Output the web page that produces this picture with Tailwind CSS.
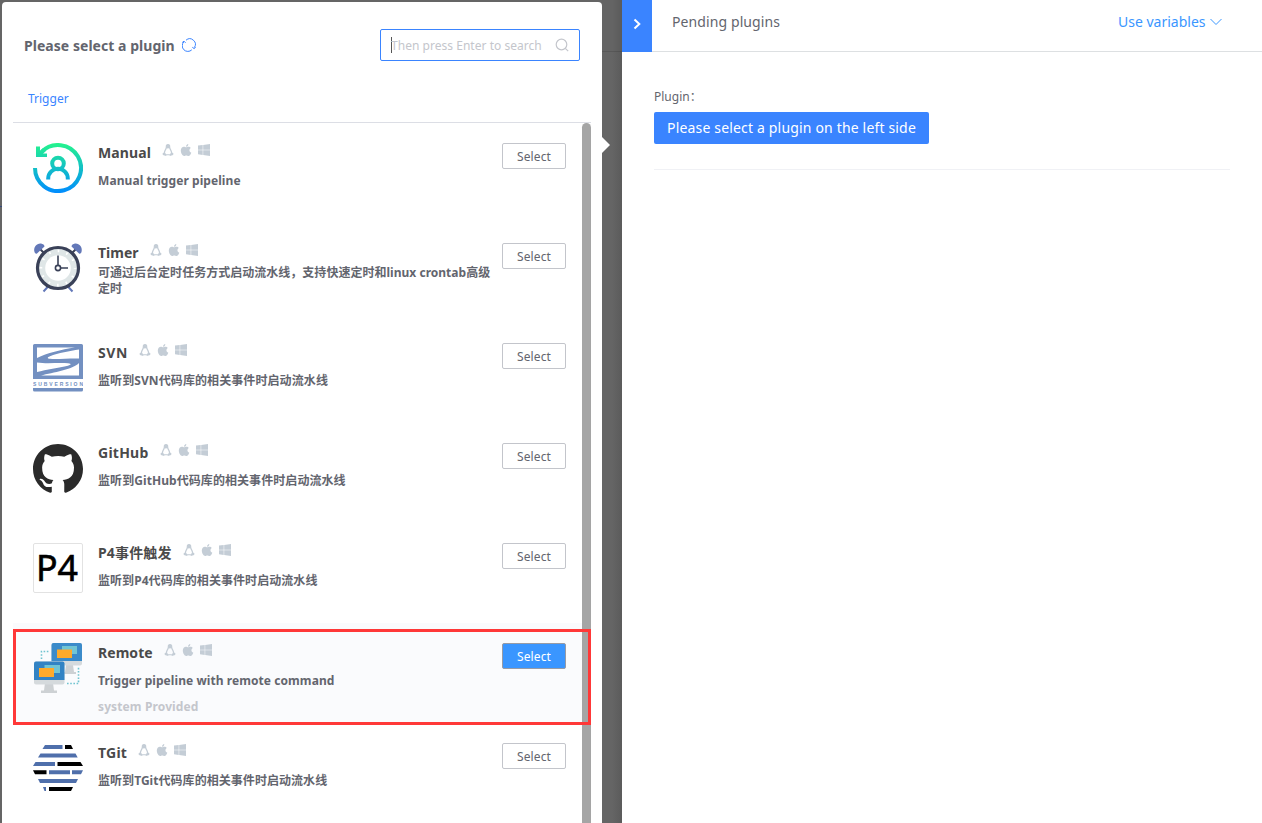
<!DOCTYPE html>
<html lang="en">
<head>
<meta charset="utf-8">
<title>Plugin selector</title>
<script src="https://cdn.jsdelivr.net/npm/@tailwindcss/browser@4"></script>
</head>
<body class="relative flex h-[823px] w-[1262px] overflow-hidden bg-[#656565] font-['Noto_Sans','Noto_Sans_CJK_SC',sans-serif] text-[12px] text-[#63656e]">
<svg class="absolute size-0">
  <defs>
    <symbol id="linux" viewBox="0 0 12 12"><path d="M6 .7C4.600.7 4.300 1.700 4.400 3c.1 1.200-.5 1.800-1.100 3-.5 1-.9 2-.9 3M6 .7c1.400 0 1.700 1 1.600 2.300-.1 1.200.5 1.800 1.100 3 .5 1 .9 2 .9 3" fill="none" stroke="#c4cdd6" stroke-width="1.300"/><path d="M4.500 1h3v2.600L6 4.700l-1.500-1zM.5 9.600l1.900-1.400 2.300 2.600-.6 1.200-3.200-1.100zM11.500 9.600 9.600 8.200l-2.300 2.600.6 1.200 3.200-1.100zM4.500 10.300h3v.9h-3z" fill="#c4cdd6"/></symbol>
    <symbol id="apple" viewBox="0 0 12 12"><path d="M8.300 0c.1 1.500-1 2.800-2.300 2.800C5.900 1.400 7 .2 8.300 0zM6.100 3.300c.5 0 1.200-.6 2.300-.6 1 0 1.900.5 2.400 1.300-2 1.200-1.700 3.900.5 4.700C10.700 10.300 9.700 12 8.500 12c-.9 0-1.200-.5-2.200-.5S5 12 4.200 12C2.600 12 .8 9.100.8 6.500c0-2.500 1.500-3.800 3-3.800 1 0 1.800.6 2.300.6z" fill="#c4cdd6"/></symbol>
    <symbol id="windows" viewBox="0 0 12 12"><path d="M0 1.600 4.700 1v4.700H0zM5.200.9 12 0v5.700H5.200zM0 6.200h4.700v4.700L0 10.300zM5.200 6.200H12V12l-6.800-1z" fill="#c4cdd6"/></symbol>
    <linearGradient id="teal" x1="0" y1="0" x2="0" y2="50" gradientUnits="userSpaceOnUse"><stop stop-color="#25f48c"/><stop offset="1" stop-color="#008cff"/></linearGradient>
  </defs>
</svg>

<!-- dimmed page behind the panels -->
<div class="absolute left-[602px] top-0 h-[52px] w-5 border-b border-[#585858] bg-[#646464]"></div>
<div class="absolute left-[602px] top-0 h-full w-5 bg-linear-to-r from-transparent from-50% to-black/10"></div>
<div class="absolute left-0 top-[206px] h-px w-[2px] bg-[#34497c]"></div>

<!-- plugin list -->
<section class="relative ml-[2px] mt-[2px] h-[821px] w-[600px] shrink-0 rounded-t-[4px] bg-white">
  <header class="flex h-[86px] justify-between pl-[22px] pr-[22px] pt-[27px]">
    <div class="flex h-8 items-center">
      <h1 class="w-[158px] whitespace-nowrap text-[14px] font-bold tracking-[0.04px]">Please select a plugin</h1>
      <svg class="h-[14px] w-[14px]" viewBox="0 0 14 14" fill="none" stroke="#3a84ff" stroke-width="1"><path d="M4 2.200A5.600 5.600 0 0 1 12.300 9.600M1.900 3.800A5.600 5.600 0 0 0 9.800 11.800M.2 4.500l1.800-1.300 1.600 1.600M10.300 9.300l1.800 1.300 1.600-1.300"/></svg>
    </div>
    <div class="flex h-8 w-[200px] items-center justify-between rounded-[2px] border border-[#3a84ff] pl-[10px] pr-[10px]">
      <div class="flex items-center text-[#c4c6cc]"><span class="h-4 w-px bg-[#555]"></span><span class="-ml-px whitespace-nowrap pt-[2px] tracking-[0.03px]">Then press Enter to search</span></div>
      <svg class="h-[14px] w-[14px]" viewBox="0 0 14 14" fill="none" stroke="#c4c6cc" stroke-width="1.200"><circle cx="6.500" cy="6.500" r="5.300"/><path d="m10.300 10.300 2.900 2.900"/></svg>
    </div>
  </header>
  <nav class="ml-[11px] h-[35px] w-[578px] border-b border-[#dcdee5] pl-[15px] text-[12px] leading-[22px] text-[#3a84ff]">Trigger</nav>

  <ul class="ml-[11px] h-[700px] w-[569px]">
    <li class="flex h-[100px] pl-[20px] pr-[16px] pt-[20px]">
      <svg class="h-[50px] w-[50px] shrink-0" viewBox="0 0 50 50" fill="none" stroke="url(#teal)" stroke-width="4"><path d="M2 25A23 23 0 1 0 8.500 9"/><path d="M3 3.500h4V8l3-3 3.500 2.500L10 10.500h4V14H3z" fill="url(#teal)" stroke="none"/><circle cx="25" cy="20.500" r="5.800"/><path d="M15.200 36.500v-1a9.800 9.800 0 0 1 19.600 0v1"/></svg>
      <div class="ml-[15px] w-[404px] shrink-0">
        <div class="flex h-[18px] items-center"><h2 class="whitespace-nowrap text-[14px] font-bold tracking-[0.1px] text-[#4a4a4a]">Manual</h2><div class="mb-[5px] ml-[11px] flex gap-[6px]"><svg class="size-3"><use href="#linux"/></svg><svg class="size-3"><use href="#apple"/></svg><svg class="size-3"><use href="#windows"/></svg></div></div>
        <p class="mt-[11px] whitespace-nowrap font-bold leading-[18px] tracking-[0.07px]">Manual trigger pipeline</p>
      </div>
      <button class="h-[26px] w-16 shrink-0 rounded-[2px] border border-[#c3c5cb] bg-white pt-[2px] text-[12px] tracking-[0.1px]">Select</button>
    </li>
    <li class="flex h-[100px] pl-[20px] pr-[16px] pt-[20px]">
      <svg class="h-[50px] w-[50px] shrink-0" viewBox="0 0 50 50"><path d="M5 4l8 8M45 4l-8 8" stroke="#3a4158" stroke-width="2"/><path d="M1.500 9C0 4 4 0 8 .5c2 .3 3.500 1.500 3.500 3L4 10.500C3 11 2 10.500 1.500 9zM48.500 9C50 4 46 0 42 .5c-2 .3-3.500 1.500-3.500 3L46 10.500c1 .5 2 0 2.500-1.500z" fill="#6378b8"/><path d="m15.500 43-5 5.500M34.500 43l5 5.500" stroke="#6378b8" stroke-width="2"/><circle cx="25" cy="25" r="20.500" fill="#dfe6e7" stroke="#3a4158" stroke-width="3.200"/><circle cx="25" cy="25" r="12.800" fill="#fff"/><circle cx="25" cy="25" r="17" fill="none" stroke="#fff" stroke-width="2.500" stroke-dasharray="1.600 7.300" stroke-dashoffset=".8"/><path d="M25 12.500v10M27.500 25H35" stroke="#3a4158" stroke-width="1.600"/><circle cx="25" cy="25" r="2.600" fill="#fff" stroke="#3a4158" stroke-width="1.600"/></svg>
      <div class="ml-[15px] w-[404px] shrink-0">
        <div class="flex h-[18px] items-center"><h2 class="whitespace-nowrap text-[14px] font-bold text-[#4a4a4a]">Timer</h2><div class="mb-[5px] ml-[11px] flex gap-[6px]"><svg class="size-3"><use href="#linux"/></svg><svg class="size-3"><use href="#apple"/></svg><svg class="size-3"><use href="#windows"/></svg></div></div>
        <p class="mt-[4px] whitespace-nowrap font-bold leading-4 tracking-[0.02px]">可通过后台定时任务方式启动流水线，支持快速定时和linux crontab高级<br>定时</p>
      </div>
      <button class="h-[26px] w-16 shrink-0 rounded-[2px] border border-[#c3c5cb] bg-white pt-[2px] text-[12px] tracking-[0.1px]">Select</button>
    </li>
    <li class="flex h-[100px] pl-[20px] pr-[16px] pt-[20px]">
      <svg class="h-[50px] w-[50px] shrink-0" viewBox="0 0 50 50"><path d="M0 2.500Q0 1 1.500 1h47Q50 1 50 2.500V36H0zM0 45h50v2q0 1.500-1.500 1.500h-47Q0 48.500 0 47z" fill="#7390c1"/><path d="M4 4.500h38C28 6.500 14 10 4 15zM46 6.500V15.500C38 15 24 16.500 17 15.800c-3-.4-3-1.400 0-2.600C25 10 37 8 46 6.500zM4 19.500c9 1.500 22 0 31 .8 4 .4 3 1.600 0 2.400C26 25 13 26.500 4 29zM46 20v12.500H8C20 29.500 40 26.500 46 20z" fill="#fff"/><text x="0" y="42.500" textLength="50" font-family="Liberation Sans" font-size="5" font-weight="bold" fill="#7390c1">SUBVERSION</text></svg>
      <div class="ml-[15px] w-[404px] shrink-0">
        <div class="flex h-[18px] items-center"><h2 class="whitespace-nowrap text-[14px] font-bold tracking-[0.6px] text-[#4a4a4a]">SVN</h2><div class="mb-[5px] ml-[11px] flex gap-[6px]"><svg class="size-3"><use href="#linux"/></svg><svg class="size-3"><use href="#apple"/></svg><svg class="size-3"><use href="#windows"/></svg></div></div>
        <p class="mt-[11px] whitespace-nowrap font-bold leading-[18px] tracking-[0.09px]">监听到SVN代码库的相关事件时启动流水线</p>
      </div>
      <button class="h-[26px] w-16 shrink-0 rounded-[2px] border border-[#c3c5cb] bg-white pt-[2px] text-[12px] tracking-[0.1px]">Select</button>
    </li>
    <li class="flex h-[100px] pl-[20px] pr-[16px] pt-[20px]">
      <svg class="h-[50px] w-[50px] shrink-0" viewBox="0 0 16 16"><path fill="#2b2b2b" d="M8 .3C3.580.3 0 3.880 0 8.300c0 3.540 2.290 6.530 5.470 7.590.4.07.55-.17.55-.38 0-.19-.01-.82-.01-1.490-2.010.37-2.530-.49-2.690-.94-.09-.23-.48-.94-.82-1.130-.28-.15-.68-.52-.01-.53.63-.01 1.080.58 1.230.82.72 1.210 1.870.87 2.330.66.07-.52.28-.87.51-1.070-1.780-.2-3.640-.89-3.640-3.950 0-.87.31-1.590.82-2.150-.08-.2-.36-1.020.08-2.120 0 0 .67-.21 2.200.82.64-.18 1.320-.27 2-.27s1.360.09 2 .27c1.530-1.040 2.200-.82 2.200-.82.44 1.100.16 1.920.08 2.120.51.56.82 1.270.82 2.150 0 3.070-1.870 3.750-3.650 3.950.29.25.54.73.54 1.480 0 1.070-.01 1.930-.01 2.200 0 .21.15.46.55.38A8.010 8.010 0 0 0 16 8.300c0-4.420-3.580-8-8-8z"/></svg>
      <div class="ml-[15px] w-[404px] shrink-0">
        <div class="flex h-[18px] items-center"><h2 class="whitespace-nowrap text-[14px] font-bold tracking-[0.25px] text-[#4a4a4a]">GitHub</h2><div class="mb-[5px] ml-[11px] flex gap-[6px]"><svg class="size-3"><use href="#linux"/></svg><svg class="size-3"><use href="#apple"/></svg><svg class="size-3"><use href="#windows"/></svg></div></div>
        <p class="mt-[11px] whitespace-nowrap font-bold leading-[18px] tracking-[0.07px]">监听到GitHub代码库的相关事件时启动流水线</p>
      </div>
      <button class="h-[26px] w-16 shrink-0 rounded-[2px] border border-[#c3c5cb] bg-white pt-[2px] text-[12px] tracking-[0.1px]">Select</button>
    </li>
    <li class="flex h-[100px] pl-[20px] pr-[16px] pt-[20px]">
      <div class="flex h-[50px] w-[50px] shrink-0 items-center justify-center rounded-[2px] border border-[#e2e2e2] text-black"><svg class="size-12" viewBox="0 0 48 48"><text x="2" y="37" textLength="42" lengthAdjust="spacingAndGlyphs" font-size="36" stroke="#000" stroke-width=".6">P4</text></svg></div>
      <div class="ml-[15px] w-[404px] shrink-0">
        <div class="flex h-[18px] items-center"><h2 class="whitespace-nowrap text-[14px] font-bold tracking-[0.15px] text-[#4a4a4a]">P4事件触发</h2><div class="mb-[5px] ml-[11px] flex gap-[6px]"><svg class="size-3"><use href="#linux"/></svg><svg class="size-3"><use href="#apple"/></svg><svg class="size-3"><use href="#windows"/></svg></div></div>
        <p class="mt-[11px] whitespace-nowrap font-bold leading-[18px] tracking-[0.06px]">监听到P4代码库的相关事件时启动流水线</p>
      </div>
      <button class="h-[26px] w-16 shrink-0 rounded-[2px] border border-[#c3c5cb] bg-white pt-[2px] text-[12px] tracking-[0.1px]">Select</button>
    </li>
    <li class="flex h-[100px] bg-[#fafbfd] pl-[20px] pr-[16px] pt-[20px]">
      <svg class="h-[50px] w-[50px] shrink-0" viewBox="0 0 50 50"><path d="M8.500 16V8.500H17M34 40.500h11.500V24" fill="none" stroke="#6fc3d0" stroke-width="1.600" stroke-dasharray="1.600 1.600"/><path d="M33 22h7l1 7h2v2H28v-2h4z" fill="#cdd1d4"/><rect x="18.500" width="30.500" height="22.500" rx="2" fill="#d5dadd"/><path d="M18.500 18V2q0-2 2-2H47q2 0 2 2v16z" fill="#3b8bca"/><path d="M29 3h15v8H29z" fill="#71c5d4"/><path d="M24 6.500h15V15H24z" fill="#fdaa2b"/><path d="M12 40h8l1 7.500h3V50H8v-2.500h3z" fill="#cdd1d4"/><rect x="1" y="18.500" width="30.500" height="23" rx="2" fill="#d5dadd"/><path d="M1 37V20.500q0-2 2-2h26.500q2 0 2 2V37z" fill="#3283c4"/><path d="M11.500 22H27v8H11.500z" fill="#71c5d4"/><path d="M6 25h15v9H6z" fill="#fdaa2b"/></svg>
      <div class="ml-[15px] w-[404px] shrink-0">
        <div class="flex h-[18px] items-center"><h2 class="whitespace-nowrap text-[14px] font-bold tracking-[0.05px] text-[#4a4a4a]">Remote</h2><div class="mb-[5px] ml-[11px] flex gap-[6px]"><svg class="size-3"><use href="#linux"/></svg><svg class="size-3"><use href="#apple"/></svg><svg class="size-3"><use href="#windows"/></svg></div></div>
        <p class="mt-[11px] whitespace-nowrap font-bold leading-[18px] tracking-[0.07px]">Trigger pipeline with remote command</p>
        <p class="mt-[8px] whitespace-nowrap font-bold leading-[18px] tracking-[0.12px] text-[#c4c6cc]">system Provided</p>
      </div>
      <button class="h-[26px] w-16 shrink-0 rounded-[2px] border border-[#979ba5] bg-[#3a96ff] pt-[2px] text-[12px] tracking-[0.1px] text-white">Select</button>
    </li>
    <li class="flex h-[100px] pl-[20px] pr-[16px] pt-[20px]">
      <svg class="h-[50px] w-[50px] shrink-0" viewBox="0 0 50 50"><path d="M12 2h17.500v4H9.500zM7.500 10.500h35l2.200 4H5zM2.500 19H22v4H0zM16 27.200h21v4H16zM39 27.200h11l-2 4h-9zM5 36h40l-2 4H7zM10 44h3v4h-1.500z" fill="#4f6fab"/><path d="M32 2h6l2 4h-8zM24.500 19h23l2.500 4H24.500zM0 27.200h13.500v4H2zM16 44h24l-2 4H16z" fill="#000"/></svg>
      <div class="ml-[15px] w-[404px] shrink-0">
        <div class="flex h-[18px] items-center"><h2 class="whitespace-nowrap text-[14px] font-bold tracking-[0.25px] text-[#4a4a4a]">TGit</h2><div class="mb-[5px] ml-[11px] flex gap-[6px]"><svg class="size-3"><use href="#linux"/></svg><svg class="size-3"><use href="#apple"/></svg><svg class="size-3"><use href="#windows"/></svg></div></div>
        <p class="mt-[11px] whitespace-nowrap font-bold leading-[18px] tracking-[0.05px]">监听到TGit代码库的相关事件时启动流水线</p>
      </div>
      <button class="h-[26px] w-16 shrink-0 rounded-[2px] border border-[#c3c5cb] bg-white pt-[2px] text-[12px] tracking-[0.1px]">Select</button>
    </li>
  </ul>
  <!-- scrollbar, pointer and highlight frame -->
  <div class="absolute left-[580px] top-[121px] h-[710px] w-[9px] rounded-t-full bg-[#a5a5a5]"></div>
  <svg class="absolute left-[600px] top-[135px] h-4 w-2" viewBox="0 0 8 16"><path d="M0 0l8 8-8 8z" fill="#fff"/></svg>
  <div class="absolute left-[11px] top-[627px] h-[96px] w-[578px] border-[3px] border-[#ff3838]"></div>
</section>

<!-- plugin details -->
<aside class="relative ml-5 h-full w-[640px] shrink-0 bg-white">
  <header class="flex h-[52px] border-b border-[#dde0e2] pr-10">
    <div class="flex h-[52px] w-[30px] shrink-0 items-center justify-center bg-[#3a84ff]"><svg class="mt-[-4px] h-3 w-2" viewBox="0 0 8 12"><path d="M1.500 1.500 6.300 6l-4.800 4.500" fill="none" stroke="#fff" stroke-width="2"/></svg></div>
    <div class="flex h-[42px] flex-1 items-center justify-between pl-5 text-[14px]">
      <span class="whitespace-nowrap tracking-[0.1px]">Pending plugins</span>
      <span class="flex w-[104px] items-center justify-between whitespace-nowrap text-[#3a96ff]"><span>Use variables</span><svg class="mt-[2px] h-2 w-3 shrink-0" viewBox="0 0 12 8"><path d="m.5 1 5.500 5.500L11.500 1" fill="none" stroke="#3a96ff"/></svg></span>
    </div>
  </header>
  <main class="mx-8 h-[118px] border-b border-[#f0f1f5] pt-[36px]">
    <div class="h-[24px] whitespace-nowrap text-[12px] leading-[18px]">Plugin：</div>
    <button class="h-8 w-[275px] whitespace-nowrap rounded-[2px] bg-[#3a84ff] pb-[2px] text-[14px] tracking-[0.17px] text-white">Please select a plugin on the left side</button>
  </main>
</aside>
</body>
</html>
